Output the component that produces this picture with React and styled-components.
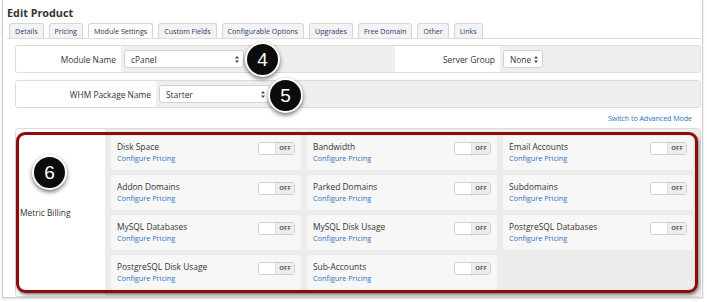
import { styled, createGlobalStyle } from "styled-components";

const GlobalStyle = createGlobalStyle`
  * { box-sizing: border-box; }
  body {
    margin: 0;
    background: #fff;
    font-family: "Open Sans", "Liberation Sans", sans-serif;
    color: #333;
  }
`;

const Page = styled.div`
  position: relative;
  width: 707px;
  height: 302px;
  overflow: hidden;
  background: #fff;
`;

const Frame = styled.div`
  margin-left: 2px;
  width: 701px;
  height: 298px;
  border: 1px solid #cfcfcf;
  border-top: none;
  box-shadow: 0 1px 2px rgba(0, 0, 0, 0.15);
  padding: 5px 1px 0 2px;
`;

const Title = styled.h1`
  margin: 0 0 0 2px;
  font-size: 10.8px;
  line-height: 15px;
  font-weight: 700;
  color: #333;
`;

const Tabs = styled.div`
  display: flex;
  gap: 5px;
  padding-left: 4px;
  margin-top: 3px;
  height: 15px;
  align-items: flex-end;
`;

const Tab = styled.div`
  height: 15px;
  padding: 0 5px;
  font-size: 7.1px;
  line-height: 14px;
  border: 1px solid #d6d6d6;
  border-bottom: ${(p) => (p.$active ? "1px solid #fff" : "none")};
  border-radius: 3px 3px 0 0;
  background: ${(p) => (p.$active ? "#fff" : "#f3f3f3")};
  color: ${(p) => (p.$active ? "#333" : "#1e3c72")};
  position: relative;
  z-index: 1;
`;

const TabPanel = styled.div`
  border-top: 1px solid #dcdcdc;
  margin: 0 0 0 2px;
  padding: 6px 0 0 8px;
  display: flex;
  flex-direction: column;
`;

const FormRow = styled.div`
  display: grid;
  grid-template-columns: ${(p) => p.$cols};
  border: 1px solid #dcdcdc;
  border-radius: 3px;
  overflow: hidden;
  margin-bottom: ${(p) => p.$mb || "0"};
`;

const Label = styled.div`
  background: #fff;
  display: flex;
  align-items: center;
  justify-content: ${(p) => (p.$left ? "flex-start" : "flex-end")};
  padding: ${(p) => (p.$left ? "0 0 0 4px" : "0 5px 0 0")};
  font-size: 8.4px;
  color: #333;
  height: ${(p) => p.$h || "26px"};
`;

const Field = styled.div`
  background: #efefef;
  display: flex;
  align-items: center;
  padding: 0 3px;
`;

const Select = styled.div`
  width: ${(p) => p.$w};
  height: 18px;
  background: #fff;
  border: 1px solid #d2d2d2;
  border-radius: 3px;
  display: flex;
  align-items: center;
  justify-content: space-between;
  padding: 0 4px 0 6px;
  font-size: 8.4px;
  color: #333;
`;

const LinkRow = styled.div`
  height: 20px;
  display: flex;
  align-items: center;
  justify-content: flex-end;
  padding-right: 9px;
`;

const Link = styled.a`
  font-size: 7.2px;
  color: #2f72c0;
  text-decoration: none;
  letter-spacing: -0.1px;
`;

const MetricGrid = styled.div`
  background: #ececec;
  display: grid;
  grid-template-columns: repeat(3, 1fr);
  grid-auto-rows: 35px;
  gap: 5px 6px;
  padding: 6px 7px 6px 6px;
`;

const Card = styled.div`
  background: #f7f7f7;
  border-radius: 2px;
  display: flex;
  justify-content: space-between;
  align-items: flex-start;
  padding: 6px 6px 0 6px;
`;

const CardText = styled.div`
  display: flex;
  flex-direction: column;
`;

const CardName = styled.span`
  font-size: 8.4px;
  line-height: 12px;
  color: #333;
`;

const CardLink = styled.a`
  font-size: 7.3px;
  line-height: 11px;
  color: #2f72c0;
  text-decoration: none;
`;

const Toggle = styled.div`
  margin-top: 1px;
  width: 37px;
  height: 13px;
  border: 1px solid #cfcfcf;
  border-radius: 3px;
  display: flex;
  overflow: hidden;
  background: #fff;
`;

const Knob = styled.div`
  flex: 1;
  background: #fff;
`;

const ToggleOff = styled.div`
  width: 19px;
  background: #ededed;
  font-size: 6px;
  font-weight: 700;
  line-height: 11px;
  text-align: center;
  color: #555;
  border-left: 1px solid #e0e0e0;
`;

const Badge = styled.div`
  position: absolute;
  left: ${(p) => p.$x}px;
  top: ${(p) => p.$y}px;
  width: 35px;
  height: 35px;
  border-radius: 50%;
  background: #0c0c0c;
  border: 2px solid #fff;
  box-shadow: 0 2px 4px rgba(0, 0, 0, 0.55);
  color: #fff;
  font-family: "Liberation Sans", Arial, sans-serif;
  font-size: 19px;
  display: flex;
  align-items: center;
  justify-content: center;
  z-index: 3;
`;

const Highlight = styled.div`
  position: absolute;
  left: 16px;
  top: 132px;
  width: 682px;
  height: 161px;
  border: 3px solid #8f0c0c;
  border-radius: 9px;
  box-shadow: 1px 2px 3px rgba(0, 0, 0, 0.45), inset 0 0 1px rgba(0, 0, 0, 0.3);
  z-index: 2;
  pointer-events: none;
`;

function Arrows() {
  return (
    <svg width="4" height="7" viewBox="0 0 4 7">
      <path d="M2 0 L4 2.6 L0 2.6 Z M2 7 L4 4.4 L0 4.4 Z" fill="#444" />
    </svg>
  );
}

const tabs = [
  "Details",
  "Pricing",
  "Module Settings",
  "Custom Fields",
  "Configurable Options",
  "Upgrades",
  "Free Domain",
  "Other",
  "Links",
];

const metrics = [
  "Disk Space",
  "Bandwidth",
  "Email Accounts",
  "Addon Domains",
  "Parked Domains",
  "Subdomains",
  "MySQL Databases",
  "MySQL Disk Usage",
  "PostgreSQL Databases",
  "PostgreSQL Disk Usage",
  "Sub-Accounts",
];

export default function App() {
  return (
    <Page>
      <GlobalStyle />
      <Frame>
        <Title>Edit Product</Title>
        <Tabs>
          {tabs.map((t) => (
            <Tab key={t} $active={t === "Module Settings"}>
              {t}
            </Tab>
          ))}
        </Tabs>
        <TabPanel>
          <FormRow $cols="105px 274px 105px 1fr" $mb="7px">
            <Label>Module Name</Label>
            <Field>
              <Select $w="120px">
                cPanel <Arrows />
              </Select>
            </Field>
            <Label>Server Group</Label>
            <Field>
              <Select $w="40px">
                None <Arrows />
              </Select>
            </Field>
          </FormRow>
          <FormRow $cols="140px 1fr">
            <Label>WHM Package Name</Label>
            <Field>
              <Select $w="111px">
                Starter <Arrows />
              </Select>
            </Field>
          </FormRow>
          <LinkRow>
            <Link href="#">Switch to Advanced Mode</Link>
          </LinkRow>
          <FormRow $cols="89px 1fr">
            <Label $left $h="auto">
              Metric Billing
            </Label>
            <MetricGrid>
              {metrics.map((m) => (
                <Card key={m}>
                  <CardText>
                    <CardName>{m}</CardName>
                    <CardLink href="#">Configure Pricing</CardLink>
                  </CardText>
                  <Toggle>
                    <Knob />
                    <ToggleOff>OFF</ToggleOff>
                  </Toggle>
                </Card>
              ))}
            </MetricGrid>
          </FormRow>
        </TabPanel>
      </Frame>
      <Highlight />
      <Badge $x={245} $y={42}>4</Badge>
      <Badge $x={268} $y={78}>5</Badge>
      <Badge $x={32} $y={155}>6</Badge>
    </Page>
  );
}
